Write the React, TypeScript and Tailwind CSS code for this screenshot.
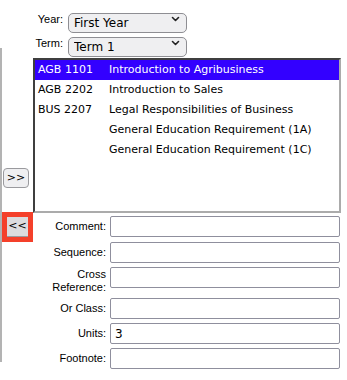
import React from "react";

const COURSES = [
  { code: "AGB 1101", title: "Introduction to Agribusiness", selected: true },
  { code: "AGB 2202", title: "Introduction to Sales" },
  { code: "BUS 2207", title: "Legal Responsibilities of Business" },
  { code: "", title: "General Education Requirement (1A)" },
  { code: "", title: "General Education Requirement (1C)" },
];

const FIELDS = [
  { label: "Comment:", value: "" },
  { label: "Sequence:", value: "" },
  { label: "Cross Reference:", value: "", wrap: true },
  { label: "Or Class:", value: "" },
  { label: "Units:", value: "3" },
  { label: "Footnote:", value: "" },
];

const verdana = "font-['DejaVu_Sans',Verdana,sans-serif]";
const arial = "font-['Liberation_Sans',Arial,sans-serif]";

function Chevron() {
  return (
    <svg className="w-[9px] h-[6px]" viewBox="0 0 9 6" fill="none" stroke="#222" strokeWidth={1.6} strokeLinecap="round" strokeLinejoin="round">
      <path d="M1.5 1.5 L4.5 4.5 L7.5 1.5" />
    </svg>
  );
}

function SelectRow({ label, value, className }: { label: string; value: string; className?: string }) {
  return (
    <div className={`flex items-center ${className ?? ""}`}>
      <div className={`w-[30px] flex justify-end whitespace-nowrap text-[11px] text-black ${arial}`}>{label}</div>
      <div className="relative ml-[5px] w-[119px] h-[20px]">
        <select
          defaultValue={value}
          className={`appearance-none w-full h-full rounded-[5px] border border-[#8e8e93] bg-[#efeff1] pl-[5px] text-[12px] text-black ${verdana} outline-none`}
        >
          <option>{value}</option>
        </select>
        <div className="pointer-events-none absolute right-[7px] top-[7px]">
          <Chevron />
        </div>
      </div>
    </div>
  );
}

export default function App() {
  return (
    <div className="w-[347px] h-[380px] bg-white flex overflow-hidden">
      {/* left rail with move buttons */}
      <div className="mt-[48px] h-[314px] w-[33px] shrink-0 border-l-2 border-[#b3b3b3] pt-[120px]">
        <button
          className={`ml-[1px] w-[26px] h-[20px] rounded-[4px] border border-[#9a9a9e] bg-[#efeff1] text-[11px] text-black ${verdana} flex items-center justify-center`}
        >
          &gt;&gt;
        </button>
        <div className="mt-[24px] w-[31px] h-[30px] border-[5px] border-[#f4402a] bg-white flex">
          <button className={`w-full h-full bg-[#dcdcde] border-b border-[#9a9a9e] text-[11px] text-black ${verdana} flex items-center justify-center`}>
            &lt;&lt;
          </button>
        </div>
      </div>

      <div className="flex-1 flex flex-col">
        <SelectRow label="Year:" value="First Year" className="mt-[9px]" />
        <SelectRow label="Term:" value="Term 1" className="mt-[4px]" />

        {/* course list */}
        <div className="mt-[5px] w-[308px] h-[155px] border-2 border-t-[#3f3f3f] border-l-[#3f3f3f] border-r-[#ababab] border-b-[#ababab] bg-white">
          {COURSES.map((c, i) => (
            <div
              key={i}
              className={`flex items-center h-[20px] pl-[3px] text-[11px] whitespace-nowrap ${verdana} ${
                c.selected ? "bg-[#3300ff] text-white" : "text-black"
              }`}
            >
              <span className="w-[71px]">{c.code}</span>
              <span>{c.title}</span>
            </div>
          ))}
        </div>

        {/* detail form */}
        <div className="mt-[3px] flex flex-col">
          {FIELDS.map((f, i) => (
            <div
              key={f.label}
              className={`flex ${f.wrap ? "items-start" : "items-center"} ${i === 0 ? "" : i === 1 ? "mt-[5px]" : "mt-[4px]"}`}
            >
              <div className={`w-[73px] text-right text-[11px] leading-[13px] text-black ${arial} ${f.wrap ? "pt-[1px]" : ""}`}>
                {f.wrap ? (
                  <>
                    Cross
                    <br />
                    Reference:
                  </>
                ) : (
                  f.label
                )}
              </div>
              <input
                defaultValue={f.value}
                className={`ml-[4px] w-[230px] h-[21px] rounded-[2px] border border-[#8f8f9d] bg-white px-[4px] text-[12px] text-black ${verdana} outline-none`}
              />
            </div>
          ))}
        </div>
      </div>
    </div>
  );
}
